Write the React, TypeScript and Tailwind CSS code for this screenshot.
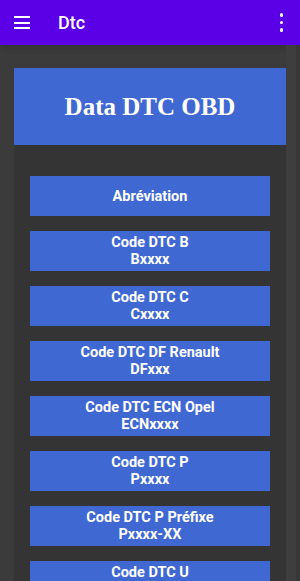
import React from "react";

const items: string[][] = [
  ["Abréviation"],
  ["Code DTC B", "Bxxxx"],
  ["Code DTC C", "Cxxxx"],
  ["Code DTC DF Renault", "DFxxx"],
  ["Code DTC ECN Opel", "ECNxxxx"],
  ["Code DTC P", "Pxxxx"],
  ["Code DTC P Préfixe", "Pxxxx-XX"],
  ["Code DTC U", "Uxxxx"],
];

export default function App() {
  return (
    <div className="w-[300px] h-[581px] overflow-hidden bg-[#3b3b3b] flex flex-col" style={{ fontFamily: "Roboto, 'Noto Sans', sans-serif" }}>
      <div className="h-[45px] shrink-0 bg-[#5b00e6] flex items-center pl-[14px] pr-[14px] shadow-md">
        <div className="flex flex-col gap-[3.5px] w-[16px]">
          <div className="h-[2px] bg-white" />
          <div className="h-[2px] bg-white" />
          <div className="h-[2px] bg-white" />
        </div>
        <div className="ml-[28px] text-white text-[18px] font-medium leading-none">Dtc</div>
        <div className="ml-auto flex flex-col gap-[4px] items-center mr-[3px]">
          <div className="w-[3.5px] h-[3.5px] rounded-full bg-white" />
          <div className="w-[3.5px] h-[3.5px] rounded-full bg-white" />
          <div className="w-[3.5px] h-[3.5px] rounded-full bg-white" />
        </div>
      </div>
      <div className="flex-1 flex">
        <div className="w-[286px] pl-[14px] pt-[23px] flex flex-col">
          <div className="h-[77px] bg-[#4068d3] flex items-center justify-center text-white text-[25px] font-bold" style={{ fontFamily: "'Liberation Serif', serif" }}>
            Data DTC OBD
          </div>
          <div className="flex-1 bg-[#343434] pt-[31px] px-[16px] flex flex-col gap-[15px]">
            {items.map((lines, i) => (
              <div key={i} className="h-[40px] shrink-0 bg-[#4068d3] flex flex-col items-center justify-center text-white text-[14.5px] font-bold leading-[17px]">
                {lines.map((l, j) => (
                  <div key={j}>{l}</div>
                ))}
              </div>
            ))}
          </div>
        </div>
        <div className="w-[10px] bg-[#3e3e3e]" />
        <div className="w-[4px] bg-[#373737]" />
      </div>
    </div>
  );
}
